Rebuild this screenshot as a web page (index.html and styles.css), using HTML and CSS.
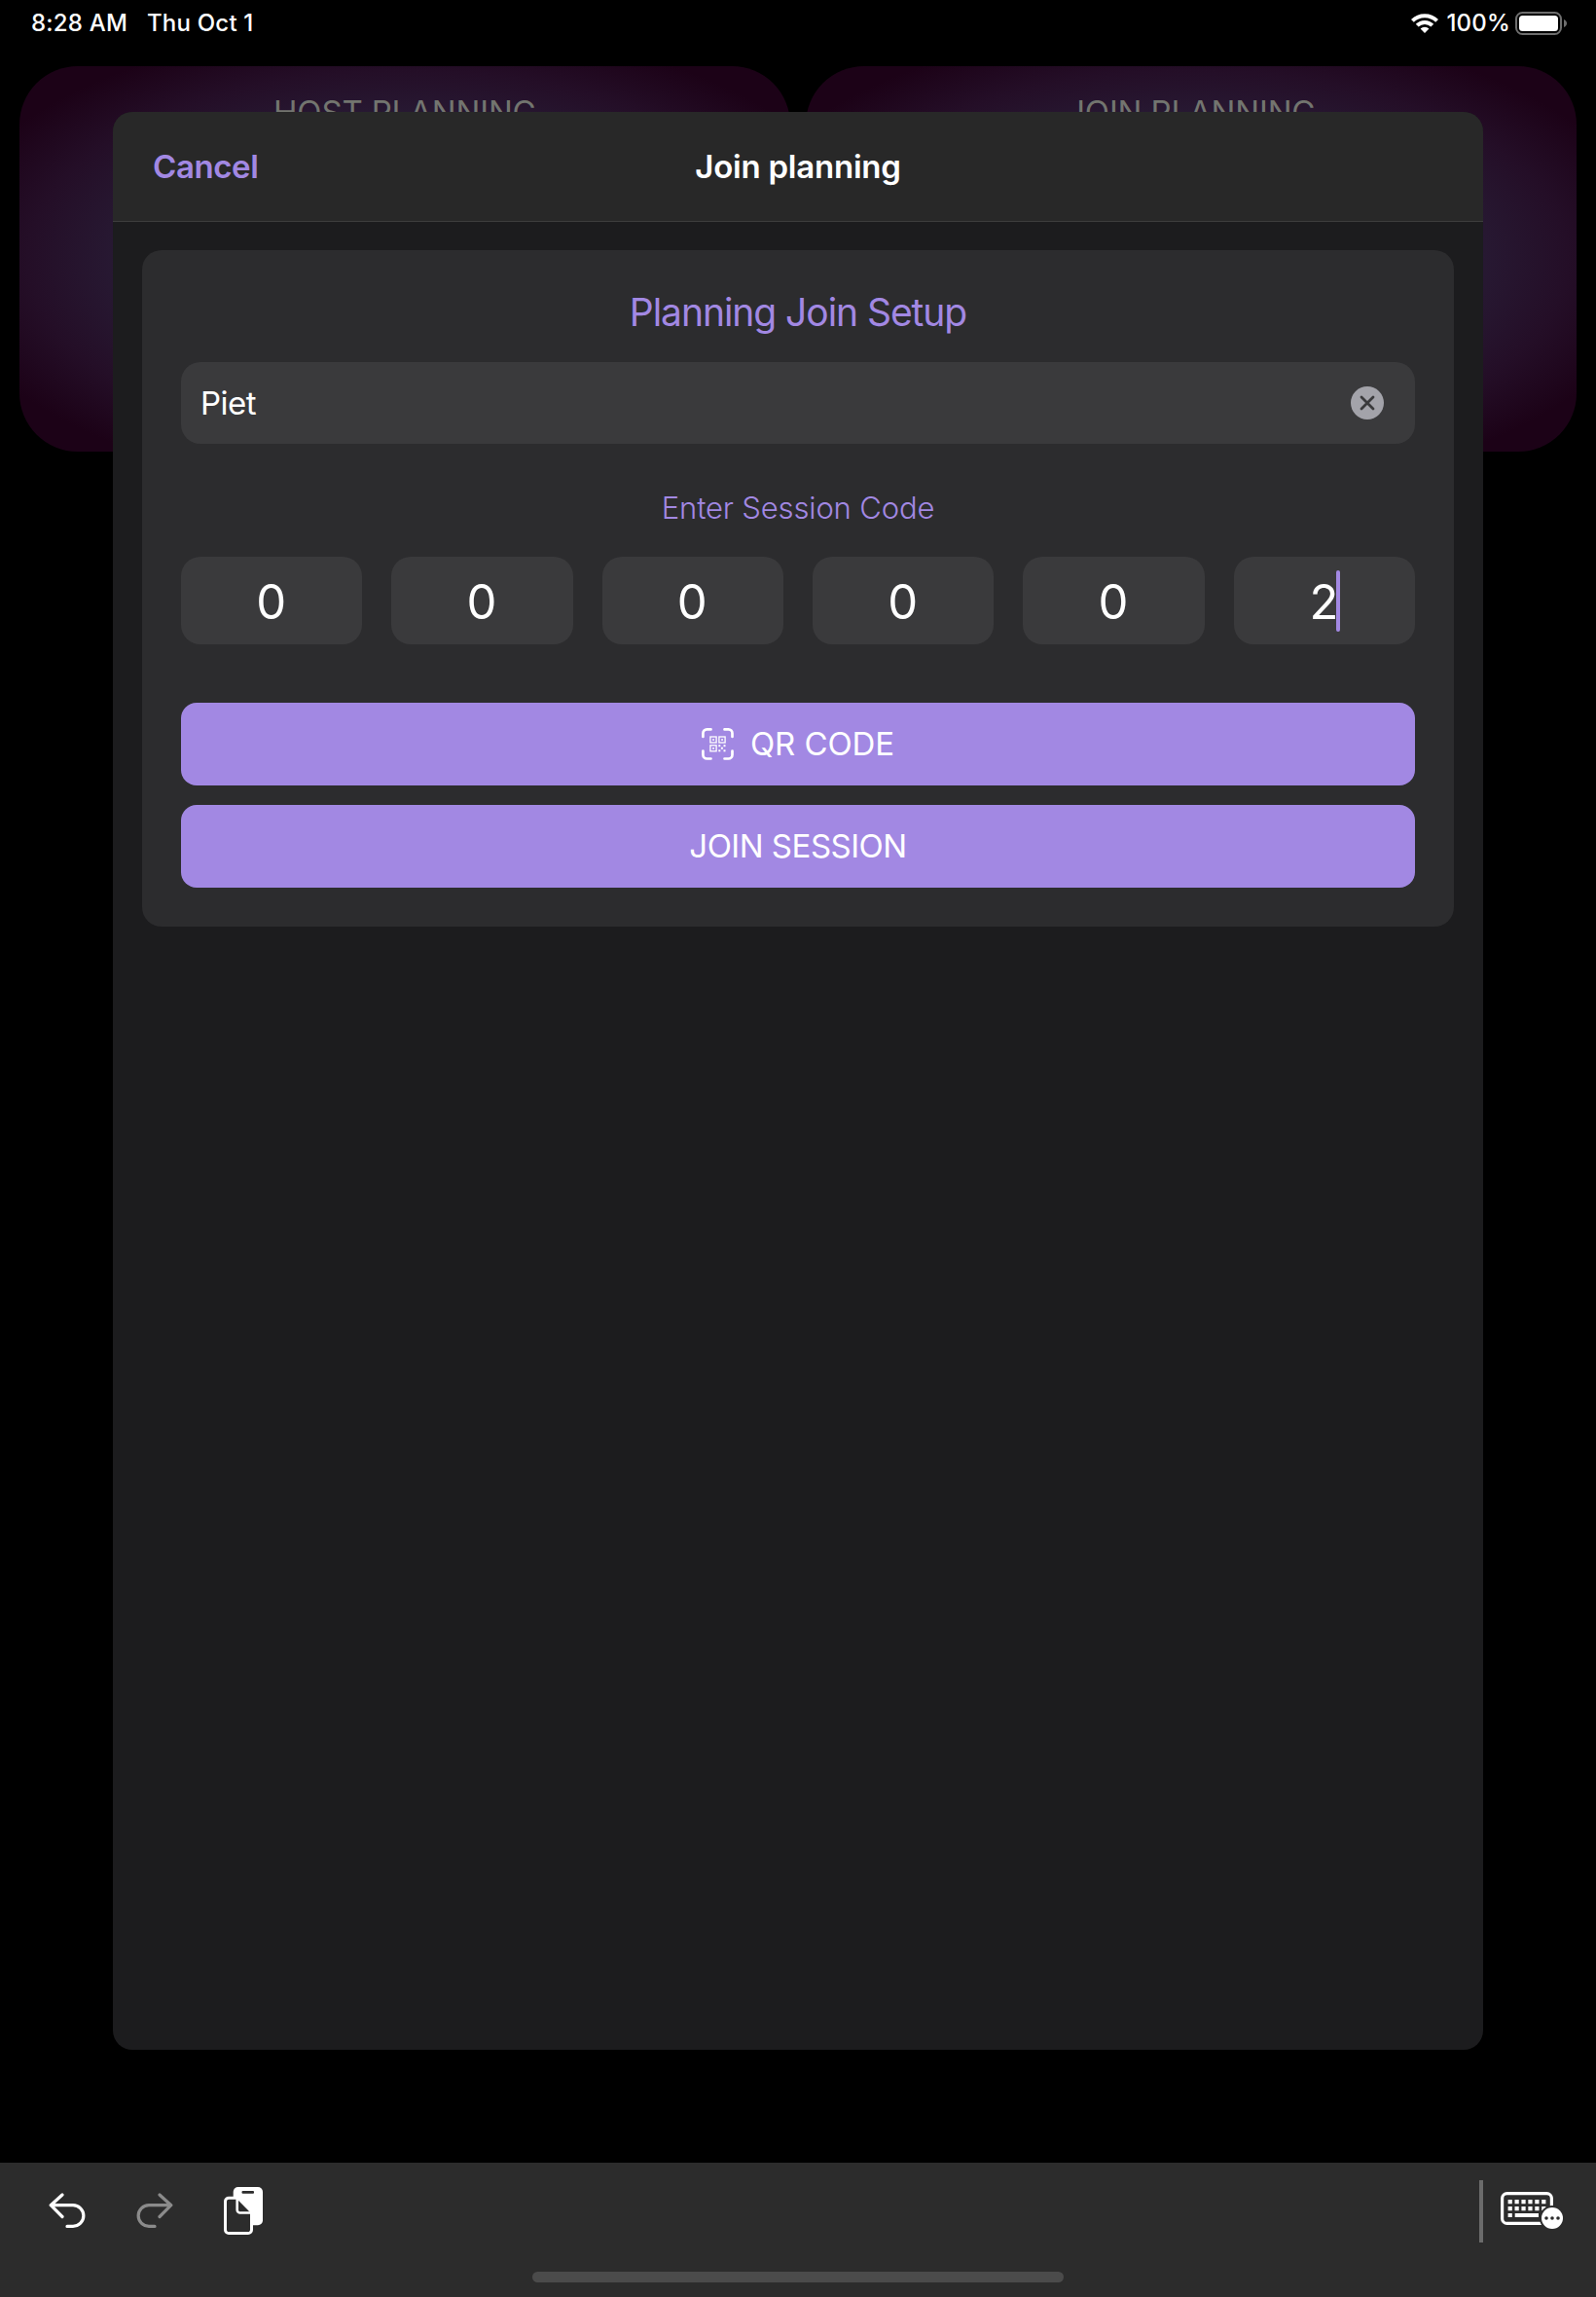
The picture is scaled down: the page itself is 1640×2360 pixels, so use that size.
FILE: index.html
```html
<!DOCTYPE html>
<html lang="en">
<head>
<meta charset="utf-8">
<title>Join planning</title>
<link rel="stylesheet" href="styles.css">
</head>
<body>
<div class="screen">
  <header class="status">
    <span class="status-time">8:28 AM</span>
    <span class="status-date">Thu Oct 1</span>
    <span class="status-right">
      <svg class="wifi" width="28" height="20" viewBox="0 0 28 20">
        <g fill="none" stroke="#fff" stroke-width="4">
          <path d="M1.4 7.4a17.8 17.8 0 0 1 25.2 0"/>
          <path d="M6.2 12.2a11 11 0 0 1 15.6 0"/>
        </g>
        <path fill="#fff" d="M9.6 15.6a6.2 6.2 0 0 1 8.8 0L14 20z"/>
      </svg>
      <span class="status-pct">100%</span>
      <svg class="battery" width="54" height="24" viewBox="0 0 54 24">
        <rect x="1" y="1" width="46" height="22" rx="6.5" fill="none" stroke="#6e6e6e" stroke-width="2"/>
        <rect x="4" y="4" width="40" height="16" rx="3.5" fill="#fff"/>
        <path d="M50 8c4 1.500 4 6.500 0 8z" fill="#6e6e6e"/>
      </svg>
    </span>
  </header>

  <main class="tiles">
    <section class="tile">HOST PLANNING</section>
    <section class="tile">JOIN PLANNING</section>
  </main>

  <footer class="toolbar">
    <div class="tools">
      <svg class="undo" width="38" height="38" viewBox="0 0 38 38" fill="none" stroke="#fff" stroke-width="3.2" stroke-linecap="round" stroke-linejoin="round">
        <path d="M14 3 2.200 13.700 14 25.500M2.200 13.700H25a10.800 10.800 0 0 1 0 21.700H19"/>
      </svg>
      <svg class="redo" width="38" height="38" viewBox="0 0 38 38" fill="none" stroke="#8b8b8b" stroke-width="3.2" stroke-linecap="round" stroke-linejoin="round">
        <path d="M24 3 35.800 13.700 24 25.500M35.800 13.700H13a10.800 10.800 0 0 0 0 21.700H19"/>
      </svg>
      <svg class="paste" width="40" height="49" viewBox="0 0 40 49">
        <rect x="9.700" y="0" width="30.300" height="39.300" rx="5" fill="#fff"/>
        <rect x="18.500" y="4" width="12.500" height="2.700" rx="1" fill="#2c2c2c"/>
        <path d="M5 11.300H14.500L28.500 25.500V44a3.500 3.500 0 0 1-3.500 3.500H5A3.500 3.500 0 0 1 1.500 44V14.800A3.500 3.500 0 0 1 5 11.300z" fill="#2c2c2c" stroke="#fff" stroke-width="3"/>
        <path d="M13.700 11.300V23.500a3 3 0 0 0 3 3H28.500" fill="none" stroke="#fff" stroke-width="2.600"/>
      </svg>
    </div>
    <div class="keys">
      <span class="rule"></span>
      <svg class="keyboard" width="64" height="38" viewBox="0 0 64 38">
        <rect x="1.600" y="1.600" width="50.800" height="30.800" rx="5" fill="none" stroke="#fff" stroke-width="3.200"/>
        <g stroke="#fff" stroke-width="4.200" fill="none">
          <path d="M7.600 10.200h39" stroke-dasharray="4.200 2.720"/>
          <path d="M7.600 17.100h39" stroke-dasharray="4.200 2.720"/>
          <path d="M7.600 24h4.200M14.700 24H39"/>
        </g>
        <circle cx="53" cy="27" r="13" fill="#2c2c2c"/>
        <circle cx="53" cy="27" r="11" fill="#fff"/>
        <g fill="#2c2c2c"><circle cx="47" cy="27" r="1.800"/><circle cx="53" cy="27" r="1.800"/><circle cx="59" cy="27" r="1.800"/></g>
      </svg>
    </div>
    <span class="home-bar"></span>
  </footer>

  <div class="modal">
    <div class="modal-head">
      <span class="cancel">Cancel</span>
      <span class="modal-title">Join planning</span>
      <span></span>
    </div>
    <div class="modal-body">
      <div class="card">
        <h1 class="setup">Planning Join Setup</h1>
        <div class="name-field">
          <span class="name">Piet</span>
          <svg width="34" height="34" viewBox="0 0 34 34">
            <circle cx="17" cy="17" r="17" fill="#a3a3aa"/>
            <path d="M11 11 23 23M23 11 11 23" stroke="#3a3a3c" stroke-width="2.800" stroke-linecap="round"/>
          </svg>
        </div>
        <h2 class="prompt">Enter Session Code</h2>
        <div class="code">
          <span class="digit">0</span>
          <span class="digit">0</span>
          <span class="digit">0</span>
          <span class="digit">0</span>
          <span class="digit">0</span>
          <span class="digit">2<i class="caret"></i></span>
        </div>
        <div class="actions">
          <div class="button qr">
            <svg width="33" height="33" viewBox="0 0 33 33" fill="none" stroke="#fff">
              <path stroke-width="2.700" stroke-linecap="round" d="M1.400 9V5.400a4 4 0 0 1 4-4H9.500M23.500 1.400h4a4 4 0 0 1 4 4V9M31.500 23.500v4a4 4 0 0 1-4 4h-4M9.500 31.500H5.400a4 4 0 0 1-4-4v-4"/>
              <g stroke-width="1.300">
                <rect x="8.900" y="9" width="6.200" height="6"/>
                <rect x="17.900" y="9" width="6.200" height="6"/>
                <rect x="8.900" y="17.800" width="6.200" height="6"/>
              </g>
              <g fill="#fff" stroke="none">
                <rect x="11.200" y="11.200" width="1.700" height="1.700"/><rect x="20.200" y="11.200" width="1.700" height="1.700"/><rect x="11.200" y="20" width="1.700" height="1.700"/>
                <rect x="17.300" y="17.200" width="2" height="2"/><rect x="22.500" y="17.200" width="2" height="2"/><rect x="19.900" y="19.700" width="2" height="2"/><rect x="17.300" y="22.300" width="2" height="2"/><rect x="22.500" y="22.300" width="2" height="2"/>
              </g>
            </svg>
            <span class="label">QR CODE</span>
          </div>
          <div class="button join"><span class="label">JOIN SESSION</span></div>
        </div>
      </div>
    </div>
  </div>
</div>
</body>
</html>
```
FILE: styles.css
```css
* { box-sizing: border-box; }
body {
  margin: 0;
  background: #000;
  color: #fff;
  font-family: Inter, "Liberation Sans", sans-serif;
}
svg { display: block; flex: none; }
.screen {
  position: relative;
  display: flex;
  flex-direction: column;
  width: 1640px;
  height: 2360px;
  overflow: hidden;
}

/* Status bar */
.status {
  display: flex;
  height: 68px;
  padding: 0 29px 0 32px;
  font-size: 24px;
  font-weight: 500;
  line-height: 48px;
  letter-spacing: 0.2px;
  white-space: nowrap;
}
.status-date { margin-left: 20px; }
.status-right { display: flex; margin-left: auto; }
.wifi { margin: 14px 8px 0 0; }
.battery { margin: 12px 0 0 5px; width: 54px; }

/* Screen behind the sheet */
.tiles { display: flex; gap: 16px; padding: 0 20px; flex: 1; }
.tile {
  flex: 1;
  height: 396px;
  padding-top: 27px;
  border-radius: 60px;
  background: radial-gradient(396px 198px at center, #281b35 70%, #240e27 98%, #1c0217 122%);
  color: #73756f;
  font-size: 33px;
  line-height: 40px;
  letter-spacing: -0.15px;
  text-align: center;
}

/* Sheet */
.modal {
  position: absolute;
  left: 116px;
  top: 115px;
  width: 1408px;
  height: 1991px;
  border-radius: 20px;
  background: #1c1c1e;
  overflow: hidden;
}
.modal-head {
  display: grid;
  grid-template-columns: 1fr auto 1fr;
  align-items: center;
  height: 113px;
  padding: 0 41px;
  border-bottom: 1px solid #3d3d3d;
  background: #282828;
  font-size: 33px;
  font-weight: 600;
  letter-spacing: -0.22px;
}
.cancel { color: #a288e3; letter-spacing: -0.4px; }
.modal-body { padding: 29px 30px; }
.card {
  height: 695px;
  padding: 40px;
  border-radius: 20px;
  background: #2c2c2e;
}
.setup, .prompt { margin: 0; color: #a288e3; text-align: center; }
.setup { font-size: 39px; font-weight: 400; line-height: 48px; letter-spacing: -1.05px; }
.name-field {
  display: flex;
  align-items: center;
  justify-content: space-between;
  height: 84px;
  margin-top: 27px;
  padding: 0 32px 0 20px;
  border-radius: 20px;
  background: #3a3a3c;
  font-size: 33px;
  letter-spacing: -0.5px;
}
.prompt { margin-top: 46px; font-size: 31px; font-weight: 300; line-height: 40px; letter-spacing: -0.15px; }
.code { display: grid; grid-template-columns: repeat(6, 1fr); gap: 30px; margin-top: 30px; }
.digit {
  position: relative;
  height: 90px;
  padding: 2px 1px 0 0;
  border-radius: 20px;
  background: #3a3a3c;
  font-size: 49px;
  line-height: 90px;
  text-align: center;
}
.caret {
  position: absolute;
  left: 105px;
  top: 14px;
  width: 4px;
  height: 63px;
  border-radius: 2px;
  background: #a288e3;
}
.actions { display: flex; flex-direction: column; gap: 20px; margin-top: 60px; }
.button {
  display: flex;
  align-items: center;
  justify-content: center;
  height: 85px;
  border-radius: 16px;
  background: #a288e3;
  font-size: 33px;
}
.label { padding-bottom: 2px; }
.qr { gap: 17px; letter-spacing: -0.1px; }
.join { letter-spacing: -0.5px; }

/* Keyboard shortcut bar */
.toolbar {
  display: grid;
  grid-template: 112px 11px / 1fr 1fr;
  height: 138px;
  background: #2c2c2c;
}
.tools { display: flex; padding-left: 50px; }
.undo { margin-top: 30px; }
.redo { margin: 30px 0 0 52px; }
.paste { margin: 25px 0 0 52px; }
.keys { display: flex; justify-content: flex-end; padding-right: 34px; }
.rule { width: 4px; height: 64px; margin-top: 18px; background: #6b6b6b; }
.keyboard { margin: 30px 0 0 18px; }
.home-bar {
  grid-column: 1 / 3;
  justify-self: center;
  width: 546px;
  height: 11px;
  border-radius: 6px;
  background: #4b4b4b;
}
```
